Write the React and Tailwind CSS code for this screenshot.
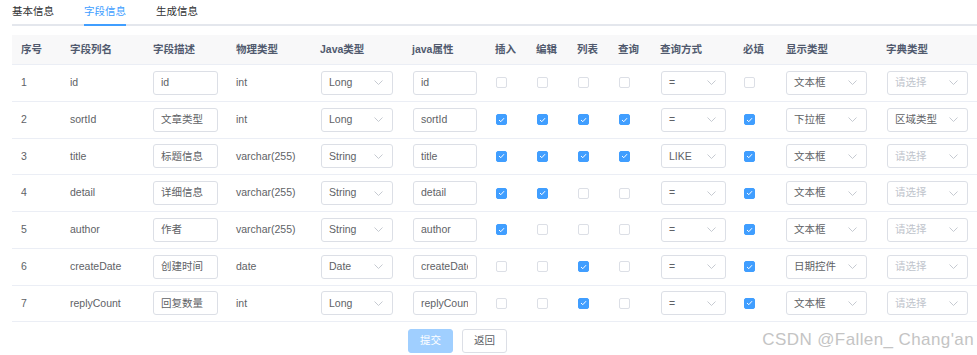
import React from "react";

const font = { fontFamily: '"Liberation Sans", Arial, "Noto Sans CJK SC", sans-serif' };

const rows = [
  [1, "id", "id", "int", "Long", "id", 0, 0, 0, 0, "=", 0, "文本框", ""],
  [2, "sortId", "文章类型", "int", "Long", "sortId", 1, 1, 1, 1, "=", 1, "下拉框", "区域类型"],
  [3, "title", "标题信息", "varchar(255)", "String", "title", 1, 1, 1, 1, "LIKE", 1, "文本框", ""],
  [4, "detail", "详细信息", "varchar(255)", "String", "detail", 1, 1, 0, 0, "=", 1, "文本框", ""],
  [5, "author", "作者", "varchar(255)", "String", "author", 1, 0, 0, 0, "=", 1, "文本框", ""],
  [6, "createDate", "创建时间", "date", "Date", "createDate", 0, 0, 1, 0, "=", 1, "日期控件", ""],
  [7, "replyCount", "回复数量", "int", "Long", "replyCount", 0, 0, 1, 0, "=", 1, "文本框", ""],
];

const headers = ["序号", "字段列名", "字段描述", "物理类型", "Java类型", "java属性", "插入", "编辑", "列表", "查询", "查询方式", "必填", "显示类型", "字典类型"];

const grid = "grid grid-cols-[49px_83px_83px_84px_92px_83px_41px_41px_41px_42px_83px_43px_100px_100px]";

function Input({ value }) {
  return (
    <div className="h-[24px] w-full border border-[#dcdfe6] rounded-[3px] bg-white pl-[7px] pr-[8px] flex items-center text-[#606266] text-[10.5px]">
      <div className="flex-1 overflow-hidden whitespace-nowrap">{value}</div>
    </div>
  );
}

function Select({ value }) {
  return (
    <div className="h-[24px] w-full border border-[#dcdfe6] rounded-[3px] bg-white pl-[7px] pr-[9px] flex items-center justify-between text-[10.5px]">
      <span className={value ? "text-[#606266]" : "text-[#c0c4cc]"}>{value || "请选择"}</span>
      <svg width="9" height="5" viewBox="0 0 9 5" fill="none">
        <path d="M0.5 0.5 L4.5 4.5 L8.5 0.5" stroke="#c0c4cc" strokeWidth="0.9" />
      </svg>
    </div>
  );
}

function Check({ on }) {
  if (on)
    return (
      <div className="w-[11px] h-[11px] rounded-[2px] bg-[#409eff] border border-[#409eff] flex items-center justify-center">
        <svg width="7" height="6" viewBox="0 0 7 6" fill="none">
          <path d="M1 3 L2.8 4.7 L6 1.2" stroke="white" strokeWidth="1" />
        </svg>
      </div>
    );
  return <div className="w-[11px] h-[11px] rounded-[2px] bg-white border border-[#dcdfe6]" />;
}

export default function App() {
  return (
    <div className="relative w-[977px] h-[355px] bg-white overflow-hidden" style={font}>
      {/* tabs */}
      <div className="ml-[12px] relative h-[26px] border-b-2 border-[#e4e7ed] flex text-[10.5px] text-[#303133]">
        <div className="pr-[15px] h-[24px] flex items-center">基本信息</div>
        <div className="px-[15px] h-[24px] flex items-center">
          <div className="relative h-full flex items-center text-[#409eff]">
            字段信息
            <div className="absolute left-0 right-0 bottom-[-2px] h-[2px] bg-[#409eff]" />
          </div>
        </div>
        <div className="px-[15px] h-[24px] flex items-center">生成信息</div>
      </div>

      {/* table */}
      <div className="ml-[12px] mt-[9px] text-[10.5px]">
        <div className={`${grid} h-[30px] bg-[#f8f8f9] border-b border-[#ebeef5] items-center font-bold text-[#515a6e]`}>
          {headers.map((h, i) => (
            <div key={i} className="pl-[9px] whitespace-nowrap">{h}</div>
          ))}
        </div>
        {rows.map((r) => (
          <div key={r[0]} className={`${grid} h-[36.75px] border-b border-[#ebeef5] items-center text-[#606266]`}>
            <div className="pl-[9px]">{r[0]}</div>
            <div className="pl-[9px]">{r[1]}</div>
            <div className="pl-[9px] pr-[9px]"><Input value={r[2]} /></div>
            <div className="pl-[9px]">{r[3]}</div>
            <div className="pl-[10px] pr-[10px]"><Select value={r[4]} /></div>
            <div className="pl-[10px] pr-[9px]"><Input value={r[5]} /></div>
            <div className="pl-[10px]"><Check on={r[6]} /></div>
            <div className="pl-[10px]"><Check on={r[7]} /></div>
            <div className="pl-[10px]"><Check on={r[8]} /></div>
            <div className="pl-[10px]"><Check on={r[9]} /></div>
            <div className="pl-[10px] pr-[8px]"><Select value={r[10]} /></div>
            <div className="pl-[10px]"><Check on={r[11]} /></div>
            <div className="pl-[9px] pr-[10px]"><Select value={r[12]} /></div>
            <div className="pl-[10px] pr-[9px]"><Select value={r[13]} /></div>
          </div>
        ))}
      </div>

      {/* buttons */}
      <div className="mt-[7px] ml-[408px] flex gap-[9px] text-[10.5px]">
        <div className="w-[45px] h-[24px] rounded-[3px] bg-[#a0cfff] border border-[#a0cfff] text-white flex items-center justify-center">提交</div>
        <div className="w-[45px] h-[24px] rounded-[3px] bg-white border border-[#dcdfe6] text-[#606266] flex items-center justify-center">返回</div>
      </div>

      {/* watermark */}
      <div className="absolute right-[3px] top-[327px] text-[17px] text-[#c4c4c4] tracking-[0.4px] whitespace-nowrap">
        CSDN @Fallen_ Chang'an
      </div>
    </div>
  );
}
